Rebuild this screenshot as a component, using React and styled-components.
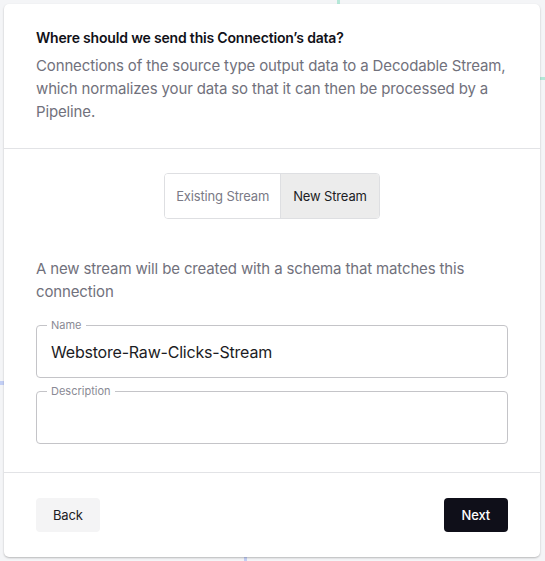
import React, { useState } from 'react'
import styled, { createGlobalStyle } from 'styled-components'

const GlobalStyle = createGlobalStyle`
  html, body {
    margin: 0;
    padding: 0;
    background: #f4f5f7;
    font-family: Inter, "Noto Sans", sans-serif;
  }
`

const Canvas = styled.div`
  position: relative;
  width: 545px;
  height: 561px;
  padding: 4px 5px 4px 4px;
  box-sizing: border-box;
  overflow: hidden;
`

const Wire = styled.div`
  position: absolute;
  background: ${p => p.color};
`

const Card = styled.div`
  position: relative;
  height: 553px;
  background: #fff;
  border-radius: 5px;
  box-shadow: 0 1px 2px rgba(0, 0, 0, 0.25);
  display: flex;
  flex-direction: column;
`

const Section = styled.div`
  padding: ${p => p.pad || '24px 32px'};
  border-bottom: 1px solid #e2e3e6;
  display: flex;
  flex-direction: column;
`

const Title = styled.h2`
  margin: 0 0 6px;
  font-size: 14px;
  line-height: 20px;
  font-weight: 600;
  letter-spacing: -0.18px;
  color: #111118;
`

const Text = styled.p`
  margin: 0;
  font-size: 15px;
  line-height: 23px;
  letter-spacing: -0.14px;
  color: #71717c;
`

const Toggle = styled.div`
  align-self: center;
  display: flex;
  border: 1px solid #dedfe2;
  border-radius: 4px;
  overflow: hidden;
  margin-bottom: 38px;
`

const ToggleOption = styled.button`
  height: 44px;
  border: none;
  border-left: ${p => (p.first ? 'none' : '1px solid #dedfe2')};
  background: ${p => (p.active ? '#ececec' : '#fff')};
  color: ${p => (p.active ? '#1c1c24' : '#7a7a86')};
  font-family: inherit;
  font-size: 13px;
  letter-spacing: -0.15px;
  padding: 0 ${p => (p.first ? '11px' : '12px')};
  cursor: pointer;
`

const Field = styled.fieldset`
  margin: ${p => p.mt || '0'} 0 0;
  padding: 0 14px;
  border: 1px solid #c4c4c8;
  border-radius: 4px;
  height: 59px;
  box-sizing: border-box;
`

const Legend = styled.legend`
  font-size: 11px;
  line-height: 12px;
  color: #8a8a94;
  padding: 0 4px;
  margin-left: -4px;
`

const Value = styled.div`
  font-size: 16px;
  line-height: 20px;
  letter-spacing: -0.2px;
  color: #1c1c24;
  padding-top: 11px;
`

const Footer = styled.div`
  display: flex;
  justify-content: space-between;
  padding: 25px 32px 0;
`

const Button = styled.button`
  height: 34px;
  padding: 0 ${p => (p.primary ? '18px' : '17px')};
  border: none;
  border-radius: 4px;
  font-family: inherit;
  font-size: 13px;
  letter-spacing: -0.15px;
  font-weight: ${p => (p.primary ? 500 : 400)};
  background: ${p => (p.primary ? '#0f0f19' : '#f4f4f5')};
  color: ${p => (p.primary ? '#fff' : '#1c1c24')};
  cursor: pointer;
`

export default function App() {
  const [mode, setMode] = useState('new')
  return (
    <>
      <GlobalStyle />
      <Canvas>
        <Wire color="#b5e8d8" style={{ left: 337, top: 0, width: 3, height: 10 }} />
        <Wire color="#b5e8d8" style={{ left: 530, top: 77, width: 20, height: 3 }} />
        <Wire color="#c3cff5" style={{ left: 0, top: 381, width: 10, height: 4 }} />
        <Wire color="#c3cff5" style={{ left: 244, top: 550, width: 3, height: 11 }} />
        <Card>
          <Section pad="24px 32px 25px">
            <Title>Where should we send this Connection’s data?</Title>
            <Text>
              Connections of the source type output data to a Decodable Stream, which normalizes your data so that it can then be processed by a Pipeline.
            </Text>
          </Section>
          <Section pad="24px 32px 28px">
            <Toggle>
              <ToggleOption first active={mode === 'existing'} onClick={() => setMode('existing')}>
                Existing Stream
              </ToggleOption>
              <ToggleOption active={mode === 'new'} onClick={() => setMode('new')}>
                New Stream
              </ToggleOption>
            </Toggle>
            <Text>A new stream will be created with a schema that matches this connection</Text>
            <Field mt="16px">
              <Legend>Name</Legend>
              <Value>Webstore-Raw-Clicks-Stream</Value>
            </Field>
            <Field mt="7px">
              <Legend>Description</Legend>
            </Field>
          </Section>
          <Footer>
            <Button>Back</Button>
            <Button primary>Next</Button>
          </Footer>
        </Card>
      </Canvas>
    </>
  )
}
